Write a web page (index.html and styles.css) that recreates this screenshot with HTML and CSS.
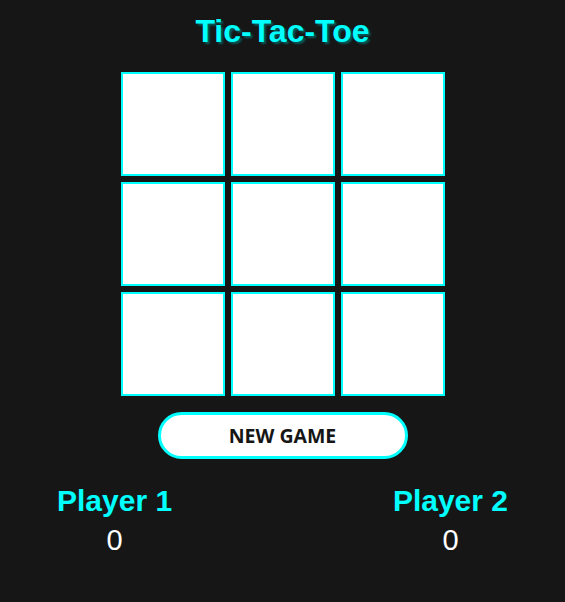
FILE: index.html
```html
<!DOCTYPE html>
<html>
<head>
<meta charset="utf-8">
<link rel="stylesheet" href="styles.css">
</head>
<body>
<div class="app">
  <h1 class="title">Tic-Tac-Toe</h1>
  <div class="board">
    <div class="cell"></div><div class="cell"></div><div class="cell"></div>
    <div class="cell"></div><div class="cell"></div><div class="cell"></div>
    <div class="cell"></div><div class="cell"></div><div class="cell"></div>
  </div>
  <button class="new-game">NEW GAME</button>
  <div class="scores">
    <div class="player">
      <div class="name">Player 1</div>
      <div class="score">0</div>
    </div>
    <div class="player">
      <div class="name">Player 2</div>
      <div class="score">0</div>
    </div>
  </div>
</div>
</body>
</html>
```
FILE: styles.css
```css
html, body {
  margin: 0;
  padding: 0;
  background: #161616;
}
body {
  font-family: "Liberation Sans", Arial, sans-serif;
  width: 565px;
  height: 602px;
  overflow: hidden;
}
.app {
  display: flex;
  flex-direction: column;
  align-items: center;
}
.title {
  margin: 13px 0 0;
  font-size: 32px;
  line-height: 36px;
  font-weight: bold;
  color: #00ffff;
  text-shadow: 2px 2px 2px #0a5a5a;
}
.board {
  margin-top: 23px;
  display: grid;
  grid-template-columns: repeat(3, 104px);
  grid-template-rows: repeat(3, 104px);
  gap: 6px;
}
.cell {
  box-sizing: border-box;
  background: #ffffff;
  border: 2px solid #00ffff;
}
.new-game {
  margin-top: 16px;
  box-sizing: border-box;
  width: 250px;
  height: 47px;
  border: 3px solid #00ffff;
  border-radius: 24px;
  background: #ffffff;
  color: #161616;
  font-family: "Open Sans", sans-serif;
  font-weight: bold;
  font-size: 19.5px;
  padding: 0;
  cursor: pointer;
}
.scores {
  align-self: stretch;
  display: flex;
  justify-content: space-between;
  padding: 0 57px;
  margin-top: 25px;
}
.player {
  display: flex;
  flex-direction: column;
  align-items: center;
}
.name {
  font-size: 30px;
  line-height: 34px;
  font-weight: bold;
  color: #00ffff;
}
.score {
  margin-top: 5px;
  font-size: 29px;
  line-height: 34px;
  color: #ffffff;
}
```
